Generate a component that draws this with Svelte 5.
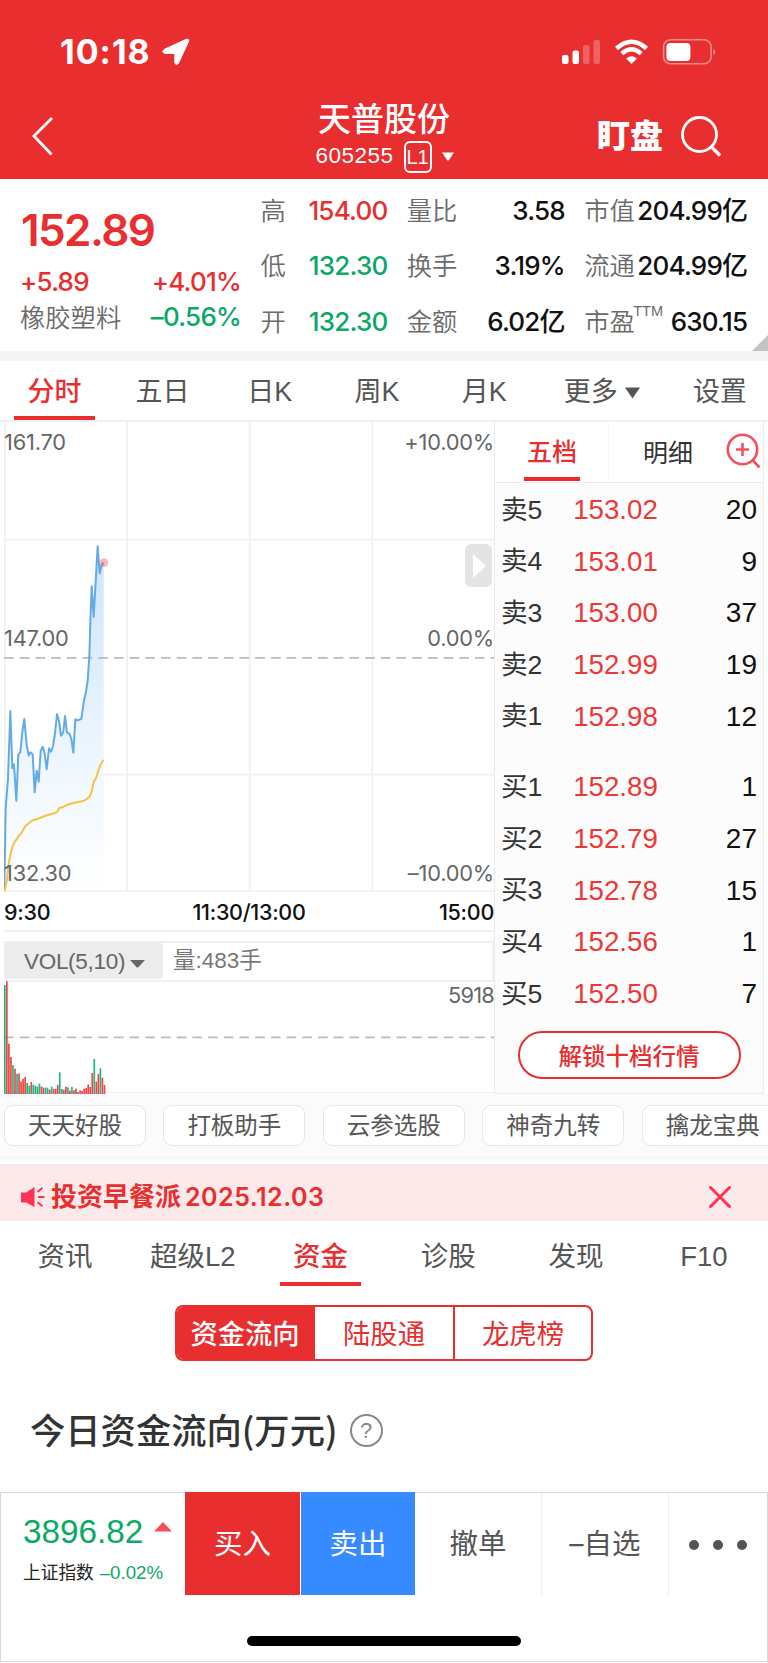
<script>
  const stats = [
    [{ label: '高', value: '154.00', tone: 'up' }, { label: '低', value: '132.30', tone: 'down' }, { label: '开', value: '132.30', tone: 'down' }],
    [{ label: '量比', value: '3.58' }, { label: '换手', value: '3.19%' }, { label: '金额', value: '6.02亿' }],
    [{ label: '市值', value: '204.99亿' }, { label: '流通', value: '204.99亿' }, { label: '市盈', sup: 'TTM', value: '630.15' }]
  ];

  const periods = ['分时', '五日', '日K', '周K', '月K', '更多', '设置'];

  const asks = [
    ['卖5', '153.02', 20],
    ['卖4', '153.01', 9],
    ['卖3', '153.00', 37],
    ['卖2', '152.99', 19],
    ['卖1', '152.98', 12]
  ];
  const bids = [
    ['买1', '152.89', 1],
    ['买2', '152.79', 27],
    ['买3', '152.78', 15],
    ['买4', '152.56', 1],
    ['买5', '152.50', 7]
  ];

  // chart space is 1470 x 1413 units, three per pixel
  const price = '1,1407 5,1162 12,1072 19,870 25,1042 30,1030 37,1139 43,1000 49,994 55,932 61,894 68,972 74,1004 79,994 86,1000 92,1114 98,1049 104,1082 110,990 116,977 122,997 128,1045 135,982 141,992 147,975 153,937 159,880 165,900 171,944 178,932 183,885 189,935 196,938 202,954 208,995 214,895 220,898 232,894 239,844 245,817 251,780 256,707 259,602 263,496 269,587 275,482 281,376 287,457 293,432 299,425';
  const average = '1,1412 8,1382 14,1327 20,1297 25,1278 31,1265 43,1247 53,1235 64,1215 86,1198 98,1195 122,1185 153,1176 160,1172 166,1161 178,1158 190,1151 208,1146 238,1140 248,1134 257,1127 263,1112 269,1082 276,1072 281,1055 289,1032 299,1016';

  // negative bars are drawn green
  const volumes = [
    -327, 338, 151, 111, -87, 76, -61, 61, 37, 46, 51, -33, -25, 36, -28, -25, -22, -31, 23, 19,
    -19, -19, 13, -22, 15, 15, 27, -65, -15, 13, 22, -20, 10, -21, 11, 16, -6, 11, 9, 16,
    18, 28, 21, 63, -105, 37, 60, -77, 49, 27
  ];

  const tools = ['天天好股', '打板助手', '云参选股', '神奇九转', '擒龙宝典'];
  const sections = ['资讯', '超级L2', '资金', '诊股', '发现', 'F10'];
  const flows = ['资金流向', '陆股通', '龙虎榜'];

  let period = '分时';
  let section = '资金';
  let flow = '资金流向';
</script>

<div class="page">
  <header>
    <div class="status">
      <div class="clock">
        10:18
        <svg width="30" height="30" viewBox="0 0 30 30"><path d="M3 12.5 L25 2.4 Q28.4 1.2 27.5 4.6 L17.6 26 Q15.2 29.6 13.8 25.6 V16.4 H4.2 Q.2 15.2 3 12.5Z" fill="#fff" stroke="#fff" /></svg>
      </div>
      <svg width="156" height="28" viewBox="0 0 156 28" fill="#fff">
        <rect x="1" y="17" width="6.500" height="9" rx="2" />
        <rect x="11.500" y="12.500" width="6.500" height="13.500" rx="2" />
        <rect x="22" y="7" width="6.500" height="19" rx="2" opacity=".25" />
        <rect x="32.500" y="2" width="6.500" height="24" rx="2" opacity=".25" />
        <path d="M55.500 9.500 Q70.500 -4 85.500 9.500" fill="none" stroke="#fff" stroke-width="4.500" transform="translate(0 1)" />
        <path d="M60.800 15.600 Q70.500 7 80.200 15.600" fill="none" stroke="#fff" stroke-width="4.300" />
        <path d="M65.200 20.500 Q70.500 16 75.800 20.500 L70.500 26Z" />
        <rect x="102.600" y="1.800" width="47.500" height="24" rx="7" fill="none" stroke="#fff" stroke-width="1.600" opacity=".45" />
        <rect x="105.400" y="5" width="24" height="18" rx="4" />
        <path d="M152.500 10.500 Q156 14 152.500 17.500Z" opacity=".45" />
      </svg>
    </div>
    <div class="nav">
      <svg width="24" height="42" viewBox="0 0 24 42"><path d="M21 3 L3 21 L20.500 39.500" fill="none" stroke="#fff" stroke-width="2.800" /></svg>
      <div class="title">
        <div class="name">天普股份</div>
        <div class="code">605255 <span class="level">L1</span> <svg width="12" height="9" viewBox="0 0 12 9"><path d="M0 .5H12L7 8Q6 9 5 8Z" fill="#fff" /></svg></div>
      </div>
      <div class="actions">
        <span class="watch">盯盘</span>
        <svg width="42" height="42" viewBox="0 0 42 42" fill="none" stroke="#fff" stroke-width="2.800"><circle cx="19.500" cy="19.500" r="17" /><path d="M32 32.500 L40 40.500" stroke-width="3.200" /></svg>
      </div>
    </div>
  </header>

  <div class="quote">
    <div class="last up">
      <div class="price">152.89</div>
      <div class="pair"><span>+5.89</span><span>+4.01%</span></div>
      <div class="pair"><span class="industry">橡胶塑料</span><span class="down">–0.56%</span></div>
    </div>
    {#each stats as column}
      <div class="column">
        {#each column as { label, sup, value, tone }}
          <div class="stat">
            <span class="label">{label}{#if sup}<span class="ttm">{sup}</span>{/if}</span>
            <span class={tone}>{value}</span>
          </div>
        {/each}
      </div>
    {/each}
    <svg class="corner" width="16" height="16" viewBox="0 0 16 16"><path d="M16 0V16H0Z" fill="#c4c4c4" /></svg>
  </div>

  <div class="periods">
    {#each periods as item}
      <div class="tab" class:active={item == period}>
        {item}
        {#if item == '更多'}
          <svg width="15" height="12" viewBox="0 0 15 12"><path d="M0 .500H15L7.500 11.500Z" fill="#555" /></svg>
        {/if}
      </div>
    {/each}
  </div>

  <div class="market">
    <div class="charts">
      <div class="plot">
        <svg width="490" height="471" viewBox="0 0 1470 1413">
          <defs>
            <linearGradient id="area" x1="0" y1="376" x2="0" y2="1413" gradientUnits="userSpaceOnUse">
              <stop offset="0" stop-color="#cbe4fb" />
              <stop offset="0.600" stop-color="#edf6fe" />
              <stop offset="1" stop-color="#fff" />
            </linearGradient>
          </defs>
          <g stroke="#f0f0f0" stroke-width="5">
            <path d="M2 0V1413M369 0V1413M737 0V1413M1105 0V1413" />
            <path d="M0 356H1470M0 1061H1470" />
          </g>
          <polygon points="1,1413 {price} 299,1413" fill="url(#area)" />
          <path d="M0 1411H1470" stroke="#f0f0f0" stroke-width="5" />
          <path d="M0 710.500H1470" stroke="#bbb" stroke-width="5.500" stroke-dasharray="29 18.100" />
          <polyline points={price} fill="none" stroke="#64aae5" stroke-width="6" stroke-linejoin="round" />
          <polyline points={average} fill="none" stroke="#f8c143" stroke-width="6" stroke-linejoin="round" />
          <circle cx="300" cy="425" r="13" fill="#e8504f" opacity=".4" />
        </svg>
        <span class="mark high">161.70</span>
        <span class="mark mid">147.00</span>
        <span class="mark low">132.30</span>
        <span class="mark right high">+10.00%</span>
        <span class="mark right mid">0.00%</span>
        <span class="mark right low">–10.00%</span>
        <span class="fold"><svg width="13" height="24" viewBox="0 0 13 24"><path d="M0 0L13 12L0 24Z" fill="#fff" /></svg></span>
      </div>
      <div class="times"><span>9:30</span><span>11:30/13:00</span><span class="close-time">15:00</span></div>
      <div class="vol-head">
        <span class="indicator">VOL(5,10) <svg width="15" height="9" viewBox="0 0 15 9"><path d="M0 1H15L8.500 8Q7.500 9 6.500 8Z" fill="#666" /></svg></span>
        <span class="amount">量:483手</span>
      </div>
      <div class="vol-plot">
        <svg width="490" height="113" viewBox="0 0 1470 339">
          <path d="M0 169H1470" stroke="#bbb" stroke-width="5.500" stroke-dasharray="29 18.100" />
          {#each volumes as v, i}
            <rect x={i * 6.1} y={339 - Math.abs(v)} width="5" height={Math.abs(v)} fill={v > 0 ? '#ee4444' : '#1fb57e'} />
          {/each}
        </svg>
        <span class="mark right peak">5918</span>
      </div>
    </div>

    <div class="book">
      <div class="book-tabs">
        <span class="five"><b>五档</b></span>
        <span class="detail">明细</span>
        <svg width="36" height="37" viewBox="0 0 36 37" fill="none" stroke="#f4505c" stroke-width="2.600"><circle cx="16.500" cy="16.500" r="14.700" /><path d="M27 27.500L33.500 34.500M10 16.500H23M16.500 10V23" /></svg>
      </div>
      <div class="orders">
        {#each asks as [side, cost, lots]}
          <div class="order"><span>{side}</span><span class="cost">{cost}</span><span class="lots">{lots}</span></div>
        {/each}
      </div>
      <div class="orders">
        {#each bids as [side, cost, lots]}
          <div class="order"><span>{side}</span><span class="cost">{cost}</span><span class="lots">{lots}</span></div>
        {/each}
      </div>
      <button class="unlock">解锁十档行情</button>
    </div>
  </div>

  <div class="tools">
    {#each tools as tool}
      <div class="chip">{tool}</div>
    {/each}
  </div>

  <div class="notice">
    <svg width="24" height="20" viewBox="0 0 24 20" fill="none" stroke="#ff3355" stroke-width="2"><path d="M0 5.500H5L13.500 0V20L5 15.500H0Z" fill="#ff3355" stroke="none" /><path d="M16.500 5L21.500 .800M17 10H23.500M16.500 15.200L21.500 19.200" /></svg>
    <span class="headline">投资早餐派</span><span class="date">2025.12.03</span>
    <svg class="close" width="22" height="22" viewBox="0 0 22 22"><path d="M1.500 1.500L20.500 20.500M20.500 1.500L1.500 20.500" stroke="#ff3355" stroke-width="3" stroke-linecap="round" /></svg>
  </div>

  <div class="sections">
    {#each sections as item}
      <div class="tab" class:active={item == section}>{item}</div>
    {/each}
  </div>

  <div class="flows">
    {#each flows as item}
      <div class="flow" class:on={item == flow}>{item}</div>
    {/each}
  </div>

  <h2>
    <span>今日资金流向(万元)</span>
    <i>?</i>
  </h2>

  <footer>
    <div class="bar">
      <div class="index">
        <div class="points down">3896.82 <svg width="18" height="10" viewBox="0 0 18 10"><path d="M9 0L18 9.500H0Z" fill="#f4505c" /></svg></div>
        <div class="index-name">上证指数 <span class="down">–0.02%</span></div>
      </div>
      <div class="buy">买入</div>
      <div class="sell">卖出</div>
      <div class="act">撤单</div>
      <div class="act">–自选</div>
      <div class="more"><i></i><i></i><i></i></div>
    </div>
    <div class="home"></div>
  </footer>
</div>

<style>
:global(body) {
  background: #fff;
}

.page {
  width: 768px;
  height: 1663px;
  overflow: hidden;
  display: flex;
  flex-direction: column;
  box-sizing: border-box;
  font-family: Inter, 'Noto Sans CJK SC', sans-serif;
  line-height: 1;
  color: #555;
  white-space: nowrap;
}

.page * {
  box-sizing: border-box;
}

.page > * {
  flex: none;
}

svg {
  display: block;
  flex: none;
}

.up {
  color: #e82e2f;
}

.down {
  color: #0ba866;
}

header {
  height: 179px;
  background: #e82e2f;
  color: #fff;
}

.status {
  height: 98px;
  padding: 5px 51px 0 60px;
  display: flex;
  align-items: center;
  justify-content: space-between;
}

.clock {
  display: flex;
  align-items: center;
  gap: 10px;
  font-size: 34px;
  font-weight: 700;
  letter-spacing: 1px;
}

.nav {
  height: 76px;
  padding: 0 31px;
  display: grid;
  grid-template-columns: 1fr 150px 1fr;
  align-items: center;
}

.title {
  display: flex;
  flex-direction: column;
  align-items: center;
}

.name {
  height: 41px;
  font-size: 33px;
  line-height: 38px;
  font-weight: 500;
}

.code {
  height: 32px;
  padding-left: 1px;
  display: flex;
  align-items: center;
  gap: 10px;
  font-family: 'Liberation Sans', sans-serif;
  font-size: 22.5px;
  letter-spacing: 0.5px;
}

.level {
  width: 28px;
  height: 32px;
  border: 2px solid #fff;
  border-radius: 6px;
  line-height: 29px;
  font-size: 20px;
  letter-spacing: 0;
  text-align: center;
}

.actions {
  display: flex;
  align-items: center;
  justify-content: flex-end;
  gap: 17px;
  margin-right: 15px;
}

.watch {
  font-size: 33px;
  font-weight: 900;
}

.quote {
  position: relative;
  height: 182px;
  padding: 4px 21px 0;
  border-bottom: 10px solid #f4f4f4;
  display: grid;
  grid-template-columns: 220px 127px 158px 163px;
  column-gap: 19.4px;
  font-size: 26px;
  font-weight: 500;
  letter-spacing: -0.8px;
}

.last {
  padding-top: 19px;
}

.price {
  height: 62px;
  line-height: 57px;
  font-size: 44px;
  font-weight: 600;
  letter-spacing: -1.6px;
}

.pair {
  height: 35px;
  margin-left: -1px;
  display: flex;
  align-items: center;
  justify-content: space-between;
}

.industry, .label {
  font-family: 'Noto Sans CJK SC', sans-serif;
  font-size: 25.3px;
  font-weight: 350;
  letter-spacing: 0;
  color: #6a6a6a;
}

.label {
  padding-bottom: 3px;
}

.column {
  color: #111;
}

.stat {
  position: relative;
  height: 55.3px;
  padding-top: 1px;
  display: flex;
  align-items: center;
  justify-content: space-between;
}

.stat .up {
  color: #e82e2f;
}

.stat .down {
  color: #0ba866;
}

.ttm {
  position: absolute;
  left: 49px;
  top: 10px;
  font-family: 'Liberation Sans', sans-serif;
  font-size: 14.5px;
}

.corner {
  position: absolute;
  right: 0;
  bottom: 0;
}

.periods {
  position: relative;
  z-index: 1;
  height: 61px;
  margin-bottom: -1px;
  border-bottom: 2px solid #f0f0f0;
  display: grid;
  grid-template-columns: 109px repeat(4, 107.2px) 128px 1fr;
}

.tab {
  position: relative;
  display: flex;
  align-items: center;
  justify-content: center;
  gap: 7px;
  padding-top: 4px;
  font-size: 27px;
  font-family: 'Liberation Sans', 'Noto Sans CJK SC', sans-serif;
}

.periods .tab:last-child {
  padding-left: 6px;
}

.tab.active {
  color: #e82e2f;
  font-weight: 500;
}

.tab.active::after {
  content: '';
  position: absolute;
  left: 50%;
  bottom: 0;
  width: 81px;
  height: 4px;
  margin-left: -40.5px;
  background: #e82e2f;
}

.market {
  height: 673px;
  display: flex;
  padding-left: 4px;
}

.charts {
  width: 490px;
}

.plot {
  position: relative;
  height: 471px;
}

.mark {
  position: absolute;
  left: 0;
  height: 24px;
  line-height: 24px;
  font-size: 21.8px;
  letter-spacing: -0.2px;
  color: #666;
}

.mark.right {
  left: auto;
  right: 0;
}

.high {
  top: 9px;
}

.mid {
  top: 205px;
}

.low {
  top: 440px;
}

.mark.peak {
  top: 2px;
  letter-spacing: -0.8px;
}

.fold {
  position: absolute;
  right: 2px;
  top: 123px;
  width: 27px;
  height: 43px;
  border-radius: 6px;
  padding-left: 2px;
  background: #e4e4e4;
  display: flex;
  align-items: center;
  justify-content: center;
}

.times {
  height: 40px;
  padding-top: 3px;
  border-bottom: 2px solid #f0f0f0;
  display: grid;
  grid-template-columns: 1fr auto 1fr;
  align-items: center;
  font-size: 21.5px;
  font-weight: 500;
  letter-spacing: -0.3px;
  color: #111;
}

.close-time {
  text-align: right;
}

.vol-head {
  height: 41px;
  margin-top: 9px;
  border: 2px solid #f0f0f0;
  border-left: 0;
  display: flex;
  font-family: 'Liberation Sans', 'Noto Sans CJK SC', sans-serif;
  font-size: 22.5px;
  line-height: 35px;
  color: #777;
}

.indicator {
  width: 159px;
  height: 36px;
  padding-left: 20px;
  display: flex;
  align-items: center;
  gap: 8px;
  background: #ececec;
  border-radius: 3px;
  letter-spacing: -0.3px;
  color: #666;
}

.indicator svg {
  margin: 4px 0 0 -3px;
}

.amount {
  margin-left: 10px;
}

.vol-plot {
  position: relative;
  height: 112px;
  border-bottom: 1px solid #f0f0f0;
}

.vol-plot svg {
  margin-top: -1px;
}

.book {
  width: 270px;
  background: #fcfcfc;
  border: 1px solid #ebebeb;
  border-top: 0;
  display: flex;
  flex-direction: column;
  align-items: stretch;
}

.book-tabs {
  height: 62px;
  flex: none;
  background: #fff;
  border-bottom: 1px solid #ebebeb;
  display: flex;
  align-items: center;
  font-size: 25px;
  color: #333;
}

.five {
  width: 114px;
  height: 61px;
  border-right: 1px solid #f6f6f6;
  padding-left: 1px;
  display: flex;
  justify-content: center;
}

.five b {
  width: 56px;
  height: 60px;
  line-height: 63px;
  border-bottom: 4px solid #e82e2f;
  text-align: center;
  font-weight: 500;
  color: #e82e2f;
}

.detail {
  width: 118px;
  padding-top: 4px;
  text-align: center;
}

.book-tabs svg {
  margin: 0 0 0 -1px;
}

.orders {
  margin-bottom: 19px;
}

.orders + .orders {
  margin-bottom: 12px;
}

.order {
  height: 51.7px;
  padding: 2px 6px 0;
  display: grid;
  grid-template-columns: 54px 121px 1fr;
  align-items: center;
  font-family: 'Liberation Sans', 'Noto Sans CJK SC', sans-serif;
  font-size: 26.6px;
  color: #333;
}

.cost {
  font-size: 27.7px;
  text-align: center;
  color: #ee3838;
}

.lots {
  font-size: 28px;
  text-align: right;
  color: #111;
}

.unlock {
  align-self: center;
  width: 223px;
  height: 48px;
  padding: 0;
  border: 2px solid #e82e2f;
  border-radius: 24px;
  background: #fff;
  font: 500 23.5px/44px 'Noto Sans CJK SC', sans-serif;
  color: #e82e2f;
}

.tools {
  height: 70px;
  padding: 11px 0 0 4px;
  display: flex;
  gap: 17.7px;
  background: linear-gradient(#fbfbfb 61px, #f4f4f4 65px, #fff 66px);
}

.chip {
  flex: none;
  width: 141.8px;
  height: 41px;
  border: 1px solid #e6e6e6;
  border-radius: 9px;
  background: #fff;
  text-align: center;
  font-size: 23.5px;
  line-height: 40px;
}

.notice {
  height: 57px;
  padding: 9px 37px 0 21px;
  display: flex;
  align-items: center;
  background: #fce9e9;
  font-size: 26px;
  font-weight: 600;
  color: #e82e2f;
}

.headline {
  margin: 0 4px 0 6px;
}

.date {
  font-size: 25px;
  letter-spacing: 0.5px;
}

.close {
  margin: 0 0 0 auto;
}

.sections {
  height: 65px;
  padding-left: 1px;
  display: grid;
  grid-template-columns: repeat(6, 127.8px);
}

.sections .tab {
  padding-top: 7px;
  font-size: 27.5px;
}

.flows {
  align-self: center;
  width: 418px;
  height: 56px;
  margin-top: 19px;
  border: 2px solid #e82e2f;
  border-radius: 8px;
  display: grid;
  grid-template-columns: 136px 140px 1fr;
  overflow: hidden;
}

.flow {
  text-align: center;
  line-height: 55px;
  font-size: 27.3px;
  color: #e82e2f;
}

.flow + .flow {
  border-left: 2px solid #e82e2f;
}

.flow.on {
  background: #e82e2f;
  color: #fff;
  font-weight: 500;
}

h2 {
  height: 131px;
  margin: 0;
  padding: 8px 0 0 30px;
  display: flex;
  align-items: center;
  gap: 12px;
  font-family: 'Noto Sans CJK SC', sans-serif;
  font-size: 35.3px;
  font-weight: 500;
  color: #333;
}

h2 span {
  padding-bottom: 4px;
}

h2 i {
  width: 33px;
  height: 33px;
  border: 2px solid #888;
  border-radius: 50%;
  text-align: center;
  font: 22px/29px 'Liberation Sans', sans-serif;
  color: #888;
}

footer {
  height: 170px;
  border: 1px solid #d8d8d8;
}

.bar {
  height: 102px;
  display: flex;
}

.bar > div {
  display: flex;
  align-items: center;
  justify-content: center;
  padding-top: 1px;
  font-size: 28.5px;
}

.bar .index {
  width: 184px;
  padding: 9px 0 0 22px;
  flex-direction: column;
  align-items: flex-start;
  gap: 16px;
}

.points {
  display: flex;
  gap: 11px;
  font-family: 'Liberation Sans', sans-serif;
  font-size: 33.3px;
}

.points svg {
  margin-top: 7px;
}

.index-name {
  font-family: 'Liberation Sans', 'Noto Sans CJK SC', sans-serif;
  font-size: 17.7px;
  color: #222;
}

.index-name .down {
  margin-left: 1px;
  font-size: 18.7px;
}

.bar .buy, .bar .sell {
  width: 115px;
  margin-right: 1px;
  margin-top: -1px;
  background: #e82e2f;
  color: #fff;
}

.bar .sell {
  width: 114px;
  margin-right: 0;
  background: #358bff;
}

.bar .act {
  width: 127px;
  border-right: 1px solid #eee;
}

.bar .more {
  flex: 1;
  gap: 14px;
}

.more i {
  width: 10px;
  height: 10px;
  border-radius: 50%;
  background: #555;
}

.home {
  width: 274px;
  height: 10px;
  margin: 41px auto 0;
  border-radius: 5px;
  background: #000;
}
</style>
